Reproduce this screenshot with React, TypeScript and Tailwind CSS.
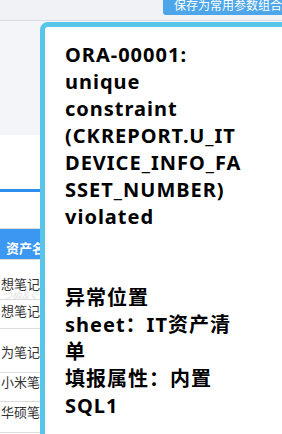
import type { ReactNode } from 'react';

type AssetRow = {
  name: string;
  // row height and text offset differ per row (other columns wrap)
  className: string;
};

const assetRows: AssetRow[] = [
  { name: '想笔记本电脑', className: 'h-[40px] pt-[16px]' },
  { name: '想笔记本电脑', className: 'h-[29px] pt-[3px]' },
  { name: '为笔记本电脑', className: 'h-[44px] pt-[15px]' },
  { name: '小米笔记本', className: 'h-[29px] pt-[1px]' },
  { name: '华硕笔记本', className: 'h-[31px] pt-[2px]' },
];

const errorMessage =
  'ORA-00001: unique constraint (CKREPORT.U_ITDEVICE_INFO_FASSET_NUMBER) violated\n\n\n异常位置\nsheet：IT资产清单\n填报属性：内置SQL1';

function ErrorPopover({ children }: { children: ReactNode }) {
  return (
    <div className="absolute left-[40px] top-[22px] h-[420px] w-[260px] rounded-tl-[8px] border-[5px] border-[#58c6ea] bg-white pl-[20px] pt-[14px]">
      <p className="w-[179px] whitespace-pre-line font-['Noto_Sans','Noto_Sans_CJK_SC',sans-serif] text-[20px] font-bold leading-[27px] tracking-[1px] text-black [overflow-wrap:anywhere]">
        {children}
      </p>
    </div>
  );
}

export default function App() {
  return (
    <div className="relative h-[434px] w-[282px] overflow-hidden bg-white font-['Noto_Sans_CJK_SC','Noto_Sans',sans-serif]">
      <header className="flex h-[21px] justify-end border-b border-[#dcdde2] bg-[#f1f2f6]">
        <button
          className="-mr-[10px] -mt-[6px] flex h-[21px] items-center rounded-bl-[3px] bg-[#4ea6ea] pl-[11px] pr-[10px] text-[12px] leading-none text-white"
          type="button"
        >
          保存为常用参数组合
        </button>
      </header>

      <section className="h-[114px] bg-[#f4f5f8]" />

      <div className="h-[54px]" />
      <div className="h-[3px] w-[140px] bg-[#2f8df0]" />
      <div className="h-[36px]" />

      <div className="relative w-[160px]">
        <div className="h-[32px] border-t border-b border-[#dcdcdc] bg-[#3c97f2] pl-[6px] pt-[11px] text-[13px] font-semibold leading-[16px] text-white">
          资产名称
        </div>
        {assetRows.map((row, index) => (
          <div
            key={index}
            className={`border-b border-[#dcdcdc] pl-[1px] text-[13px] leading-[16px] text-[#333] ${row.className}`}
          >
            {row.name}
          </div>
        ))}
        <span className="pointer-events-none absolute left-[2px] top-[59px] text-[10px] italic text-[#e4e4e4]">
          つぬ&ぐ
        </span>
      </div>

      <ErrorPopover>{errorMessage}</ErrorPopover>
    </div>
  );
}
